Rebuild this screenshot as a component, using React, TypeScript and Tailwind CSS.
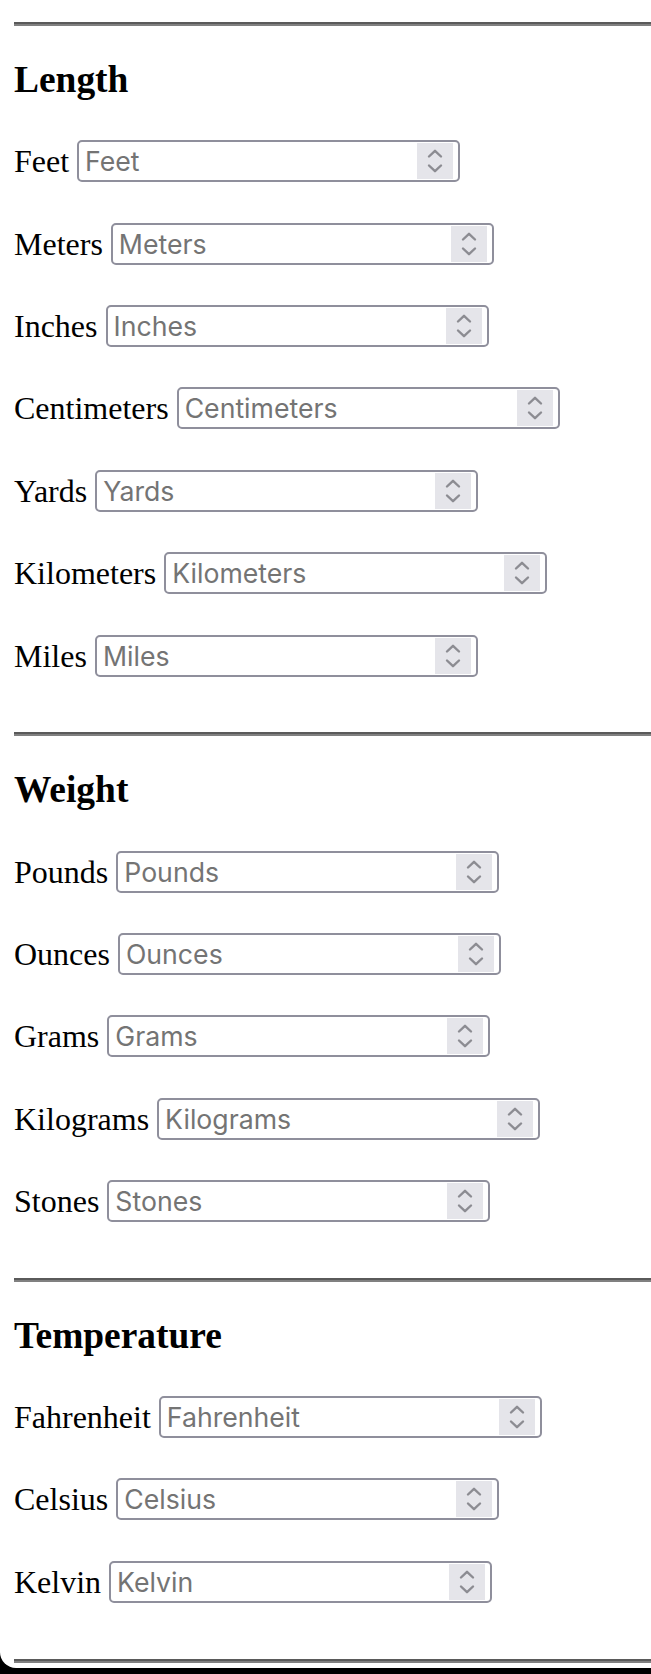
import React from "react";

type Section = { title: string; units: string[] };

const sections: Section[] = [
  { title: "Length", units: ["Feet", "Meters", "Inches", "Centimeters", "Yards", "Kilometers", "Miles"] },
  { title: "Weight", units: ["Pounds", "Ounces", "Grams", "Kilograms", "Stones"] },
  { title: "Temperature", units: ["Fahrenheit", "Celsius", "Kelvin"] },
];

function Rule() {
  return <div className="h-[4px] border-t-2 border-b-2 border-t-[#5a5a5a] border-b-[#808080]" />;
}

function Spinner() {
  return (
    <div className="w-[36px] h-[36px] bg-[#e5e5ea] mr-[5px] shrink-0">
      <svg width="36" height="36" viewBox="0 0 36 36" fill="none">
        <polyline points="12,13.5 18,7.8 24,13.5" stroke="#8c8c92" strokeWidth="2.4" strokeLinecap="round" strokeLinejoin="round" />
        <polyline points="12,22.5 18,28.2 24,22.5" stroke="#8c8c92" strokeWidth="2.4" strokeLinecap="round" strokeLinejoin="round" />
      </svg>
    </div>
  );
}

function Row({ unit }: { unit: string }) {
  return (
    <div className="flex items-center gap-[8px] h-[42px]">
      <label className="text-[32px] leading-[42px] text-black font-['Liberation_Serif',serif]">{unit}</label>
      <div className="flex items-center w-[383px] h-[42px] border-2 border-[#8f8f9c] rounded-[5px] bg-white">
        <input
          type="text"
          placeholder={unit}
          className="flex-1 min-w-0 h-full pl-[6px] bg-transparent outline-none text-[26.67px] text-black placeholder:text-[#747474] font-['Inter',sans-serif]"
        />
        <Spinner />
      </div>
    </div>
  );
}

export default function App() {
  return (
    <div className="bg-black min-h-[1674px]">
      <div className="bg-white rounded-bl-[16px] pl-[14px] pt-[22px] pb-[5px]">
        {sections.map((s) => (
          <div key={s.title}>
            <Rule />
            <h3 className="mt-[32px] h-[43px] text-[37.44px] leading-[43px] font-bold text-black font-['Liberation_Serif',serif]">
              {s.title}
            </h3>
            <div className="mt-[39.2px] mb-[55.8px] flex flex-col gap-[40.4px]">
              {s.units.map((u) => (
                <Row key={u} unit={u} />
              ))}
            </div>
          </div>
        ))}
        <Rule />
      </div>
    </div>
  );
}
